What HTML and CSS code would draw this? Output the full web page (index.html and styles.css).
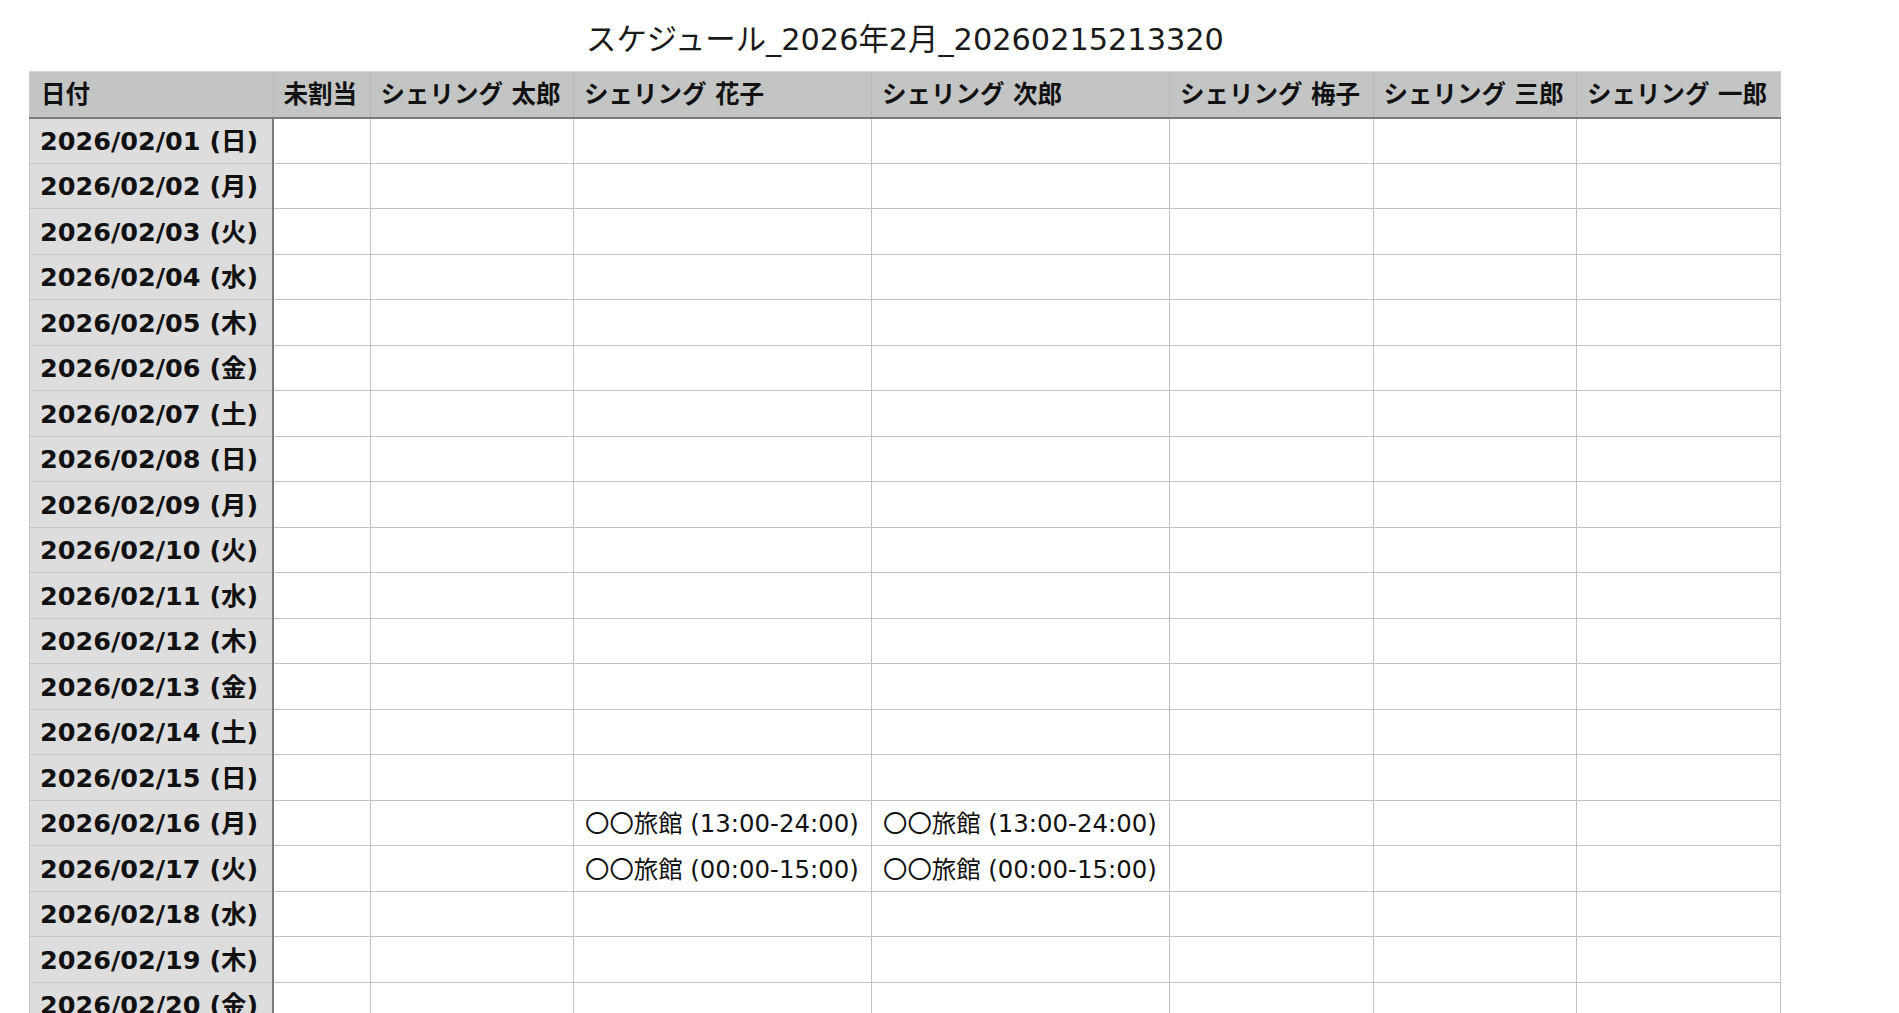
FILE: index.html
```html
<!DOCTYPE html>
<html lang="ja">
<head>
<meta charset="utf-8">
<title>スケジュール_2026年2月_20260215213320</title>
<link rel="stylesheet" href="styles.css">
</head>
<body>
<div class="sheet">
  <h1 class="title">スケジュール_2026年2月_20260215213320</h1>
  <table class="grid">
    <colgroup>
      <col class="c-date"><col class="c-un"><col class="c-s"><col class="c-w"><col class="c-w"><col class="c-s"><col class="c-s"><col class="c-s">
    </colgroup>
    <thead>
      <tr class="head">
        <th class="h-date">日付</th>
        <th>未割当</th>
        <th>シェリング 太郎</th>
        <th>シェリング 花子</th>
        <th>シェリング 次郎</th>
        <th>シェリング 梅子</th>
        <th>シェリング 三郎</th>
        <th class="h-last">シェリング 一郎</th>
      </tr>
    </thead>
    <tbody>
      <tr><th class="d">2026/02/01 (日)</th><td></td><td></td><td></td><td></td><td></td><td></td><td></td></tr>
      <tr><th class="d">2026/02/02 (月)</th><td></td><td></td><td></td><td></td><td></td><td></td><td></td></tr>
      <tr><th class="d">2026/02/03 (火)</th><td></td><td></td><td></td><td></td><td></td><td></td><td></td></tr>
      <tr><th class="d">2026/02/04 (水)</th><td></td><td></td><td></td><td></td><td></td><td></td><td></td></tr>
      <tr><th class="d">2026/02/05 (木)</th><td></td><td></td><td></td><td></td><td></td><td></td><td></td></tr>
      <tr><th class="d">2026/02/06 (金)</th><td></td><td></td><td></td><td></td><td></td><td></td><td></td></tr>
      <tr><th class="d">2026/02/07 (土)</th><td></td><td></td><td></td><td></td><td></td><td></td><td></td></tr>
      <tr><th class="d">2026/02/08 (日)</th><td></td><td></td><td></td><td></td><td></td><td></td><td></td></tr>
      <tr><th class="d">2026/02/09 (月)</th><td></td><td></td><td></td><td></td><td></td><td></td><td></td></tr>
      <tr><th class="d">2026/02/10 (火)</th><td></td><td></td><td></td><td></td><td></td><td></td><td></td></tr>
      <tr><th class="d">2026/02/11 (水)</th><td></td><td></td><td></td><td></td><td></td><td></td><td></td></tr>
      <tr><th class="d">2026/02/12 (木)</th><td></td><td></td><td></td><td></td><td></td><td></td><td></td></tr>
      <tr><th class="d">2026/02/13 (金)</th><td></td><td></td><td></td><td></td><td></td><td></td><td></td></tr>
      <tr><th class="d">2026/02/14 (土)</th><td></td><td></td><td></td><td></td><td></td><td></td><td></td></tr>
      <tr><th class="d">2026/02/15 (日)</th><td></td><td></td><td></td><td></td><td></td><td></td><td></td></tr>
      <tr><th class="d">2026/02/16 (月)</th><td></td><td></td><td>〇〇旅館 (13:00-24:00)</td><td>〇〇旅館 (13:00-24:00)</td><td></td><td></td><td></td></tr>
      <tr><th class="d">2026/02/17 (火)</th><td></td><td></td><td>〇〇旅館 (00:00-15:00)</td><td>〇〇旅館 (00:00-15:00)</td><td></td><td></td><td></td></tr>
      <tr><th class="d">2026/02/18 (水)</th><td></td><td></td><td></td><td></td><td></td><td></td><td></td></tr>
      <tr><th class="d">2026/02/19 (木)</th><td></td><td></td><td></td><td></td><td></td><td></td><td></td></tr>
      <tr><th class="d">2026/02/20 (金)</th><td></td><td></td><td></td><td></td><td></td><td></td><td></td></tr>
      <tr><th class="d">2026/02/21 (土)</th><td></td><td></td><td></td><td></td><td></td><td></td><td></td></tr>
      <tr><th class="d">2026/02/22 (日)</th><td></td><td></td><td></td><td></td><td></td><td></td><td></td></tr>
      <tr><th class="d">2026/02/23 (月)</th><td></td><td></td><td></td><td></td><td></td><td></td><td></td></tr>
      <tr><th class="d">2026/02/24 (火)</th><td></td><td></td><td></td><td></td><td></td><td></td><td></td></tr>
      <tr><th class="d">2026/02/25 (水)</th><td></td><td></td><td></td><td></td><td></td><td></td><td></td></tr>
      <tr><th class="d">2026/02/26 (木)</th><td></td><td></td><td></td><td></td><td></td><td></td><td></td></tr>
      <tr><th class="d">2026/02/27 (金)</th><td></td><td></td><td></td><td></td><td></td><td></td><td></td></tr>
      <tr><th class="d">2026/02/28 (土)</th><td></td><td></td><td></td><td></td><td></td><td></td><td></td></tr>
    </tbody>
  </table>
</div>
</body>
</html>
```

FILE: styles.css
```css
html, body {
  margin: 0;
  padding: 0;
  background: #ffffff;
}

body {
  font-family: "DejaVu Sans", "Noto Sans CJK JP", sans-serif;
  color: #111111;
}

.sheet {
  padding: 0 0 40px 29px;
  width: 1752px;
}

.title {
  margin: 0;
  height: 71px;
  font-size: 30.35px;
  font-weight: 400;
  line-height: 79px;
  text-align: center;
  color: #1a1a1a;
}

.grid {
  border-collapse: collapse;
  table-layout: fixed;
  width: 1751px;
}

.c-date { width: 243.5px; }
.c-un { width: 97px; }
.c-s { width: 203.5px; }
.c-w { width: 298px; }

.head {
  height: 46px;
}

.head th {
  background: #c3c5c4;
  font-size: 24.5px;
  font-weight: 700;
  text-align: left;
  padding: 0 0 4px 10px;
  white-space: nowrap;
  border-top: 1px solid #d2d2d2;
  border-left: 1px dotted #acaeac;
  border-right: 1px dotted #acaeac;
  border-bottom: 2px solid #7a7a7a;
  color: #111111;
}

.head .h-date {
  padding-left: 11px;
  border-left: 1px solid #c8c8c8;
}

.head .h-last {
  border-right: 1px solid #c8c8c8;
}

tbody tr {
  height: 45.5px;
}

tbody td {
  border: 1px solid #c2c2c2;
  padding: 0 0 2px 11px;
  font-size: 24.4px;
  font-weight: 400;
  white-space: nowrap;
  color: #111111;
}

tbody .d {
  background: #dddddd;
  text-align: left;
  font-size: 25.5px;
  font-weight: 700;
  padding: 0 0 4px 10px;
  border-top: 1px solid #c6c6c6;
  border-bottom: 1px solid #c6c6c6;
  border-left: 1px solid #c6c6c6;
  border-right: 2px solid #7d7d7d;
  white-space: nowrap;
  color: #111111;
}
```
